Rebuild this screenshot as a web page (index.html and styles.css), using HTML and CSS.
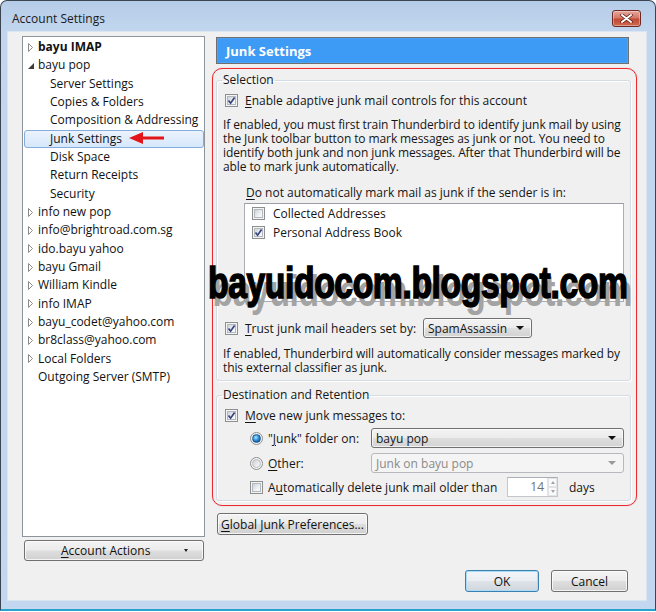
FILE: index.html
```html
<!DOCTYPE html>
<html>
<head>
<meta charset="utf-8">
<link rel="stylesheet" href="styles.css">
</head>
<body>
<div class="window">
  <div class="titlebar">
    <span class="title">Account Settings</span>
    <div class="close">
      <svg width="13" height="9" viewBox="0 0 13 9"><path d="M2 1 L11 8 M11 1 L2 8" stroke="#5a1a14" stroke-width="3.4" stroke-linecap="round"/><path d="M2 1 L11 8 M11 1 L2 8" stroke="#fff" stroke-width="2" stroke-linecap="round"/></svg>
    </div>
  </div>
  <div class="client">
    <div class="main">
      <div class="leftcol">
        <div class="tree">
          <div class="row bold"><span class="tw"><svg width="8" height="9" viewBox="0 0 8 9"><path d="M1.5 0.5 L5.5 4.5 L1.5 8.5 Z" fill="#fff" stroke="#8a8a8a"/></svg></span>bayu IMAP</div>
          <div class="row"><span class="tw"><svg width="8" height="9" viewBox="0 0 8 9"><path d="M7 2 L7 8 L1 8 Z" fill="#3c3c3c"/></svg></span>bayu pop</div>
          <div class="row child">Server Settings</div>
          <div class="row child">Copies &amp; Folders</div>
          <div class="row child">Composition &amp; Addressing</div>
          <div class="row child sel">Junk Settings</div>
          <div class="row child">Disk Space</div>
          <div class="row child">Return Receipts</div>
          <div class="row child">Security</div>
          <div class="row"><span class="tw"><svg width="8" height="9" viewBox="0 0 8 9"><path d="M1.5 0.5 L5.5 4.5 L1.5 8.5 Z" fill="#fff" stroke="#8a8a8a"/></svg></span>info new pop</div>
          <div class="row"><span class="tw"><svg width="8" height="9" viewBox="0 0 8 9"><path d="M1.5 0.5 L5.5 4.5 L1.5 8.5 Z" fill="#fff" stroke="#8a8a8a"/></svg></span>info@brightroad.com.sg</div>
          <div class="row"><span class="tw"><svg width="8" height="9" viewBox="0 0 8 9"><path d="M1.5 0.5 L5.5 4.5 L1.5 8.5 Z" fill="#fff" stroke="#8a8a8a"/></svg></span>ido.bayu yahoo</div>
          <div class="row"><span class="tw"><svg width="8" height="9" viewBox="0 0 8 9"><path d="M1.5 0.5 L5.5 4.5 L1.5 8.5 Z" fill="#fff" stroke="#8a8a8a"/></svg></span>bayu Gmail</div>
          <div class="row"><span class="tw"><svg width="8" height="9" viewBox="0 0 8 9"><path d="M1.5 0.5 L5.5 4.5 L1.5 8.5 Z" fill="#fff" stroke="#8a8a8a"/></svg></span>William Kindle</div>
          <div class="row"><span class="tw"><svg width="8" height="9" viewBox="0 0 8 9"><path d="M1.5 0.5 L5.5 4.5 L1.5 8.5 Z" fill="#fff" stroke="#8a8a8a"/></svg></span>info IMAP</div>
          <div class="row"><span class="tw"><svg width="8" height="9" viewBox="0 0 8 9"><path d="M1.5 0.5 L5.5 4.5 L1.5 8.5 Z" fill="#fff" stroke="#8a8a8a"/></svg></span>bayu_codet@yahoo.com</div>
          <div class="row"><span class="tw"><svg width="8" height="9" viewBox="0 0 8 9"><path d="M1.5 0.5 L5.5 4.5 L1.5 8.5 Z" fill="#fff" stroke="#8a8a8a"/></svg></span>br8class@yahoo.com</div>
          <div class="row"><span class="tw"><svg width="8" height="9" viewBox="0 0 8 9"><path d="M1.5 0.5 L5.5 4.5 L1.5 8.5 Z" fill="#fff" stroke="#8a8a8a"/></svg></span>Local Folders</div>
          <div class="row"><span class="tw"></span>Outgoing Server (SMTP)</div>
        </div>
        <div class="btn actions"><span class="btn-label"><u>A</u>ccount Actions</span><span class="mini-arrow"></span></div>
      </div>
      <div class="rightcol">
        <div class="hdr">Junk Settings</div>
        <fieldset class="grp sel-grp">
          <legend>Selection</legend>
          <div class="crow r-enable"><span class="cb on"><i></i><svg viewBox="0 0 13 13"><path d="M3.5 6.5 L5.6 9.2 L9.6 3.6" stroke="#34437f" stroke-width="1.7" fill="none"/></svg></span><span class="clabel"><u>E</u>nable adaptive junk mail controls for this account</span></div>
          <p class="para p1">If enabled, you must first train Thunderbird to identify junk mail by using<br>the Junk toolbar button to mark messages as junk or not. You need to<br>identify both junk and non junk messages. After that Thunderbird will be<br>able to mark junk automatically.</p>
          <div class="donot"><u>D</u>o not automatically mark mail as junk if the sender is in:</div>
          <div class="listbox">
            <div class="li"><span class="cb"><i></i></span><span class="litext">Collected Addresses</span></div>
            <div class="li"><span class="cb on"><i></i><svg viewBox="0 0 13 13"><path d="M3.5 6.5 L5.6 9.2 L9.6 3.6" stroke="#34437f" stroke-width="1.7" fill="none"/></svg></span><span class="litext">Personal Address Book</span></div>
          </div>
          <div class="crow r-trust"><span class="cb on"><i></i><svg viewBox="0 0 13 13"><path d="M3.5 6.5 L5.6 9.2 L9.6 3.6" stroke="#34437f" stroke-width="1.7" fill="none"/></svg></span><span class="clabel trust-label"><u>T</u>rust junk mail headers set by:</span><div class="dd dd-spam"><span>SpamAssassin</span><span class="dd-arrow"></span></div></div>
          <p class="para p2">If enabled, Thunderbird will automatically consider messages marked by<br>this external classifier as junk.</p>
        </fieldset>
        <fieldset class="grp dest-grp">
          <legend>Destination and Retention</legend>
          <div class="crow r-move"><span class="cb on"><i></i><svg viewBox="0 0 13 13"><path d="M3.5 6.5 L5.6 9.2 L9.6 3.6" stroke="#34437f" stroke-width="1.7" fill="none"/></svg></span><span class="clabel"><u>M</u>ove new junk messages to:</span></div>
          <div class="crow sub r-junk"><span class="rb on"><i></i></span><span class="rlabel">"<u>J</u>unk" folder on:</span><div class="dd dd-wide"><span>bayu pop</span><span class="dd-arrow"></span></div></div>
          <div class="crow sub r-other"><span class="rb"><i></i></span><span class="rlabel"><u>O</u>ther:</span><div class="dd dd-wide dis"><span>Junk on bayu pop</span><span class="dd-arrow"></span></div></div>
          <div class="crow sub r-del"><span class="cb"><i></i></span><span class="rlabel del-label">A<u>u</u>tomatically delete junk mail older than</span><div class="spin"><span class="val">14</span><span class="arrows"><span class="up"></span><span class="down"></span></span></div><span class="days">days</span></div>
        </fieldset>
        <div class="btn global"><span><u>G</u>lobal Junk Preferences...</span></div>
      </div>
    </div>
    <div class="footer">
      <div class="btn ok default">OK</div>
      <div class="btn cancel">Cancel</div>
    </div>
  </div>
  <div class="annot-box"></div>
  <svg class="annot-arrow" width="38" height="14" viewBox="0 0 38 14"><path d="M1 7 L15 1 L15 5.4 L36 5.4 L36 8.6 L15 8.6 L15 13 Z" fill="#e4141b"/></svg>
  <div class="watermark">bayuidocom.blogspot.com</div>
</div>
</body>
</html>
```

FILE: styles.css
```css
* { box-sizing: border-box; }
body {
  margin: 0;
  font-family: "Open Sans", "DejaVu Sans", sans-serif;
  font-size: 12px;
  color: #151515;
  background: #ffffff;
}
u { text-decoration: underline; text-underline-offset: 2px; }

.window {
  width: 656px;
  height: 611px;
  border: 1px solid #3b4552;
  border-bottom: 2px solid #2aa3cb;
  border-radius: 7px 7px 0 0;
  background: linear-gradient(180deg, #b5cce8 0px, #c2d6ee 31px, #c3d8f0 100%);
  position: relative;
  display: flex;
  flex-direction: column;
  overflow: hidden;
}

.titlebar {
  height: 31px;
  flex: none;
  display: flex;
  align-items: center;
  justify-content: space-between;
  padding: 3px 14px 0 11px;
}
.title { color: #1a1a1a; font-size: 12px; }
.close {
  width: 29px;
  height: 17px;
  border: 1px solid #6e2a22;
  border-radius: 3px;
  background: linear-gradient(180deg, #e5a89d 0%, #d47868 45%, #c14a36 55%, #cf6a50 100%);
  box-shadow: inset 0 0 0 1px rgba(255,255,255,0.35);
  display: flex;
  align-items: center;
  justify-content: center;
}

.client {
  flex: 1;
  margin: 0 9px 9px 7px;
  background: #f0f0f0;
  box-shadow: 0 0 0 1px #d9e5f2;
  display: flex;
  flex-direction: column;
}

.main { display: flex; padding: 4px 0 0 14px; }
.leftcol { width: 183px; flex: none; display: flex; flex-direction: column; }
.tree {
  height: 501px;
  background: #ffffff;
  border: 1px solid #8d949c;
  padding-top: 1px;
}
.row {
  height: 18.33px;
  display: flex;
  align-items: center;
  padding-left: 3px;
  white-space: nowrap;
  line-height: 16px;
  color: #111;
}
.row.bold { font-weight: bold; }
.tw { width: 12px; flex: none; display: flex; align-items: center; padding-left: 1px; }
.row.child { padding-left: 27px; }
.row.sel {
  margin-left: 1px;
  padding-left: 25px;
  border: 1px solid #84acdd;
  border-radius: 3px;
  background: linear-gradient(180deg, #ebf3fd 0%, #d6e7fc 100%);
}

.btn {
  border: 1px solid #707070;
  border-radius: 3px;
  background: linear-gradient(180deg, #f3f3f3 0%, #ececec 48%, #dedede 52%, #d0d0d0 100%);
  box-shadow: inset 0 0 0 1px rgba(255,255,255,0.75);
  display: flex;
  align-items: center;
  justify-content: center;
  color: #111;
  white-space: nowrap;
}
.actions {
  margin: 3px 0 0 2px;
  width: 180px;
  height: 21px;
  justify-content: flex-start;
  padding-left: 36px;
}
.actions .btn-label { flex: none; }
.mini-arrow {
  margin-left: 34px;
  width: 0; height: 0;
  border-left: 2.5px solid transparent;
  border-right: 2.5px solid transparent;
  border-top: 3px solid #222;
}

.rightcol { margin-left: 11px; width: 415px; flex: none; padding-top: 1px; }
.hdr {
  height: 27px;
  width: 413px;
  border: 1px solid #6f6f6f;
  background: #3d9bf6;
  box-shadow: inset 0 0 0 1px #4aa3f7;
  color: #ffffff;
  font-weight: bold;
  font-size: 13px;
  padding-left: 9px;
  display: flex;
  align-items: center;
}

.grp {
  margin: 8px 0 0 0;
  padding: 0 0 5px 0;
  border: 1px solid #d3dce2;
  border-radius: 3px;
  width: 415px;
  min-width: 0;
  box-shadow: inset 1px 1px 0 #ffffff, 1px 1px 0 #ffffff;
}
.grp legend {
  margin-left: 5px;
  padding: 0 1px;
  height: 16px;
  line-height: 16px;
  color: #151515;
}
.dest-grp { margin-top: 6px; padding-bottom: 3px; }

.crow { display: flex; align-items: center; padding-left: 8px; white-space: nowrap; }
.clabel { margin-left: 7px; }
.r-enable { margin-top: 3px; height: 18px; }
.r-trust { margin-top: 16px; height: 20px; }
.trust-label { width: 178px; flex: none; }
.r-move { margin-top: 3px; height: 18px; }
.crow.sub { padding-left: 33px; height: 20px; }
.r-junk { margin-top: 4px; }
.r-other { margin-top: 5px; }
.r-del { margin-top: 4px; }
.rlabel { margin-left: 5px; width: 103px; flex: none; }
.del-label { width: 239px; }

.cb {
  width: 13px;
  height: 13px;
  flex: none;
  border: 1px solid #8e8f8f;
  background: #f4f4f4;
  padding: 1px;
  position: relative;
}
.cb i {
  display: block;
  width: 9px;
  height: 9px;
  border: 1px solid #b3b8bf;
  background: linear-gradient(135deg, #cdd2d9 0%, #eef0f2 60%, #fbfbfb 100%);
}
.cb svg { position: absolute; left: -1px; top: -1px; width: 13px; height: 13px; }

.rb {
  width: 13px;
  height: 13px;
  flex: none;
  border-radius: 50%;
  border: 1px solid #8e8f8f;
  background: #f4f4f4;
  padding: 1px;
}
.rb i {
  display: block;
  width: 9px;
  height: 9px;
  border-radius: 50%;
  border: 1px solid #b8bcc2;
  background: linear-gradient(135deg, #cfd3d9, #fafafa);
}
.rb.on i {
  border-color: #1c5a92;
  background: radial-gradient(circle at 40% 35%, #b6e6ff 0%, #45a6e8 35%, #1463b0 70%, #0c3f7a 100%);
}

.para { margin: 0; padding-left: 6px; line-height: 14px; letter-spacing: -0.1px; white-space: nowrap; color: #151515; }
.p1 { margin-top: 9px; }
.p2 { margin-top: 9px; }
.donot { margin-top: 12px; padding-left: 29px; line-height: 14px; white-space: nowrap; }
.listbox {
  margin: 3px 0 0 27px;
  width: 380px;
  height: 99px;
  background: #ffffff;
  border: 1px solid #abadb3;
  border-top-color: #9a9da4;
}
.li { height: 19px; display: flex; align-items: center; padding-left: 7px; white-space: nowrap; }
.litext { margin-left: 8px; }

.dd {
  height: 20px;
  border: 1px solid #707070;
  border-radius: 3px;
  background: linear-gradient(180deg, #f3f3f3 0%, #ececec 48%, #dedede 52%, #d3d3d3 100%);
  box-shadow: inset 0 0 0 1px rgba(255,255,255,0.7);
  display: flex;
  align-items: center;
  justify-content: space-between;
  padding: 0 7px 0 4px;
  white-space: nowrap;
}
.dd-spam { width: 109px; }
.dd-wide { width: 253px; }
.dd-arrow {
  width: 0; height: 0;
  border-left: 4px solid transparent;
  border-right: 4px solid transparent;
  border-top: 4px solid #111;
}
.dd.dis {
  border-color: #b5b9bd;
  background: #f4f4f4;
  box-shadow: none;
  color: #8a8a8a;
}
.dd.dis .dd-arrow { border-top-color: #9a9a9a; }

.spin {
  width: 51px;
  height: 20px;
  border: 1px solid #c3c6cb;
  border-top-color: #abadb3;
  background: #ffffff;
  display: flex;
}
.spin .val { flex: 1; text-align: right; color: #707070; padding-right: 3px; line-height: 18px; }
.spin .arrows { width: 10px; display: flex; flex-direction: column; border-left: 1px solid #e2e3e5; }
.spin .up, .spin .down { flex: 1; display: flex; align-items: center; justify-content: center; border: 1px solid #e2e3e5; background: #fafafa; }
.spin .up::before {
  content: ""; width: 0; height: 0;
  border-left: 2.5px solid transparent; border-right: 2.5px solid transparent;
  border-bottom: 3px solid #a5a5a5;
}
.spin .down::before {
  content: ""; width: 0; height: 0;
  border-left: 2.5px solid transparent; border-right: 2.5px solid transparent;
  border-top: 3px solid #a5a5a5;
}
.days { margin-left: 11px; }

.global {
  margin: 12px 0 0 1px;
  width: 151px;
  height: 22px;
}

.footer {
  margin-top: 9px;
  display: flex;
  justify-content: flex-end;
  gap: 12px;
  padding-right: 18px;
}
.ok { width: 74px; height: 22px; }
.cancel { width: 77px; height: 22px; }
.default {
  border-color: #3c7fb1;
  box-shadow: inset 0 0 0 1px #a9dcf6;
  background: linear-gradient(180deg, #f2f5f8 0%, #eaeef2 48%, #dde3e8 52%, #d0d6dc 100%);
}

.annot-box {
  position: absolute;
  left: 211px;
  top: 67px;
  width: 425px;
  height: 438px;
  border: 1.5px solid #ec2a2e;
  border-radius: 10px;
  box-shadow: 0 0 1px rgba(236,42,46,0.5);
  pointer-events: none;
}
.annot-arrow { position: absolute; left: 127px; top: 130px; }

.watermark {
  position: absolute;
  left: 207px;
  top: 260px;
  font-family: "Liberation Sans", Arial, sans-serif;
  font-weight: bold;
  font-size: 44px;
  line-height: 44px;
  color: #000;
  white-space: nowrap;
  -webkit-text-stroke: 1.6px #000;
  transform: scaleX(0.765);
  transform-origin: 0 0;
  text-shadow: 6px 8px 0 #a3a3a3;
  letter-spacing: -0.5px;
}
```
